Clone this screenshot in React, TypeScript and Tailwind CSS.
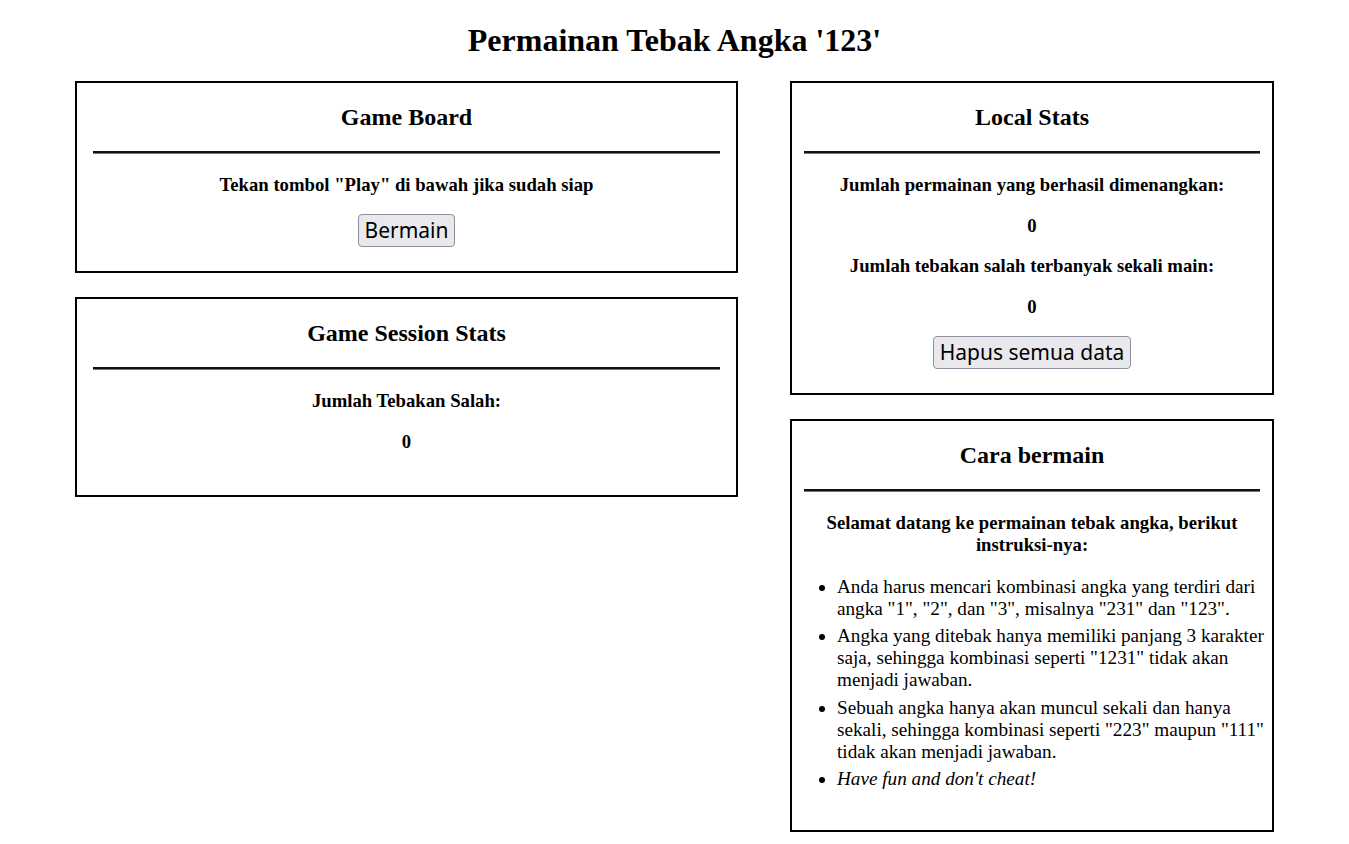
import React from "react";

const serif = { fontFamily: '"Liberation Serif", "Times New Roman", serif' };

function Box({ title, children, pb }: { title: string; children: React.ReactNode; pb: string }) {
  return (
    <div className={`border-2 border-black ${pb}`}>
      <h2 className="mt-[20px] text-center text-[24px] font-bold leading-[28px]">{title}</h2>
      <div className="mx-auto mt-[20px] h-[3px] w-[95%] bg-[#111] border-b border-[#777]" />
      {children}
    </div>
  );
}

function H3({ children, mt = "mt-[20px]" }: { children: React.ReactNode; mt?: string }) {
  return <h3 className={`${mt} text-center text-[18.72px] font-bold leading-[22px]`}>{children}</h3>;
}

function Btn({ children }: { children: React.ReactNode }) {
  return (
    <div className="mt-[18px] flex justify-center">
      <button
        className="h-[33px] rounded-[4px] border border-[#8f8f9d] bg-[#e9e9ed] px-[6px] py-0 text-[21px] leading-[29px] text-black"
        style={{ fontFamily: '"Noto Sans", "Open Sans", sans-serif' }}
      >
        {children}
      </button>
    </div>
  );
}

export default function App() {
  return (
    <div className="min-h-[844px] bg-white text-black" style={serif}>
      <h1 className="pt-[22px] text-center text-[32px] font-bold leading-[37px]">Permainan Tebak Angka '123'</h1>
      <div className="mt-[22px] flex items-start gap-[52px] px-[75px]">
        <div className="flex w-[663px] flex-col gap-[24px]">
          <Box title="Game Board" pb="pb-[24px]">
            <H3>Tekan tombol "Play" di bawah jika sudah siap</H3>
            <Btn>Bermain</Btn>
          </Box>
          <Box title="Game Session Stats" pb="pb-[42px]">
            <H3>Jumlah Tebakan Salah:</H3>
            <H3 mt="mt-[19px]">0</H3>
          </Box>
        </div>
        <div className="flex w-[484px] flex-col gap-[24px]">
          <Box title="Local Stats" pb="pb-[24px]">
            <H3>Jumlah permainan yang berhasil dimenangkan:</H3>
            <H3 mt="mt-[19px]">0</H3>
            <H3 mt="mt-[18px]">Jumlah tebakan salah terbanyak sekali main:</H3>
            <H3 mt="mt-[19px]">0</H3>
            <Btn>Hapus semua data</Btn>
          </Box>
          <Box title="Cara bermain" pb="pb-[40px]">
            <H3>Selamat datang ke permainan tebak angka, berikut instruksi-nya:</H3>
            <ul className="mt-[20px] list-disc pl-[45px] text-[19.2px] leading-[22px]">
              <li>Anda harus mencari kombinasi angka yang terdiri dari angka "1", "2", dan "3", misalnya "231" dan "123".</li>
              <li className="mt-[5px]">Angka yang ditebak hanya memiliki panjang 3 karakter saja, sehingga kombinasi seperti "1231" tidak akan menjadi jawaban.</li>
              <li className="mt-[6px]">Sebuah angka hanya akan muncul sekali dan hanya sekali, sehingga kombinasi seperti "223" maupun "111" tidak akan menjadi jawaban.</li>
              <li className="mt-[5px] italic">Have fun and don't cheat!</li>
            </ul>
          </Box>
        </div>
      </div>
    </div>
  );
}
